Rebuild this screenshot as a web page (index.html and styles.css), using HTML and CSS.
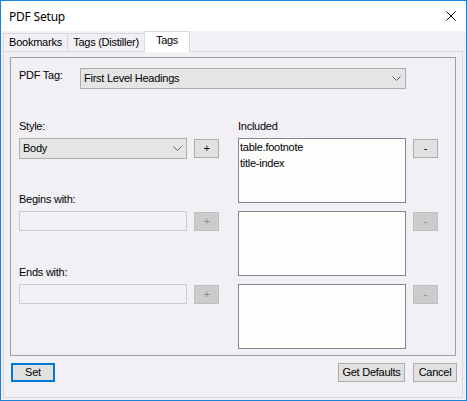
FILE: index.html
```html
<!DOCTYPE html>
<html>
<head>
<meta charset="utf-8">
<title>PDF Setup</title>
<link rel="stylesheet" href="styles.css">
</head>
<body>
<div class="window">
  <div class="titlebar">
    <span class="title">PDF Setup</span>
    <svg class="close" width="10" height="10" viewBox="0 0 10 10"><path d="M0.5 0.5 L9.5 9.5 M9.5 0.5 L0.5 9.5" stroke="#000" stroke-width="1" fill="none"/></svg>
  </div>
  <div class="client">
    <div class="tabstrip">
      <div class="tab tab-bookmarks">Bookmarks</div>
      <div class="tab tab-distiller">Tags (Distiller)</div>
      <div class="tab tab-active">Tags</div>
    </div>
    <div class="tabpage">
      <div class="panel">
        <div class="row-tag">
          <div class="label-tag">PDF Tag:</div>
          <div class="combo combo-tag"><span>First Level Headings</span><svg class="chev" width="9" height="5" viewBox="0 0 9 5"><path d="M0.5 0.5 L4.5 4.5 L8.5 0.5" stroke="#606060" fill="none"/></svg></div>
        </div>
        <div class="columns">
          <div class="col-left">
            <div class="group">
              <div class="label">Style:</div>
              <div class="field-row">
                <div class="combo combo-style"><span>Body</span><svg class="chev" width="9" height="5" viewBox="0 0 9 5"><path d="M0.5 0.5 L4.5 4.5 L8.5 0.5" stroke="#606060" fill="none"/></svg></div>
                <div class="btn-small">+</div>
              </div>
            </div>
            <div class="group">
              <div class="label">Begins with:</div>
              <div class="field-row">
                <div class="textbox"></div>
                <div class="btn-small disabled">+</div>
              </div>
            </div>
            <div class="group">
              <div class="label">Ends with:</div>
              <div class="field-row">
                <div class="textbox"></div>
                <div class="btn-small disabled">+</div>
              </div>
            </div>
          </div>
          <div class="col-right">
            <div class="label">Included</div>
            <div class="listrow">
              <div class="listbox">
                <div class="item">table.footnote</div>
                <div class="item">title-index</div>
              </div>
              <div class="btn-small">-</div>
            </div>
            <div class="listrow">
              <div class="listbox"></div>
              <div class="btn-small disabled">-</div>
            </div>
            <div class="listrow">
              <div class="listbox"></div>
              <div class="btn-small disabled">-</div>
            </div>
          </div>
        </div>
      </div>
      <div class="actions">
        <div class="btn btn-set">Set</div>
        <div class="btn btn-defaults">Get Defaults</div>
        <div class="btn btn-cancel">Cancel</div>
      </div>
    </div>
  </div>
</div>
</body>
</html>
```
FILE: styles.css
```css
* { box-sizing: border-box; }
body {
  margin: 0;
  font-family: "Liberation Sans", Arial, sans-serif;
  font-size: 11px;
  letter-spacing: -0.25px;
  color: #000;
}
.window {
  width: 467px;
  height: 401px;
  border: 1px solid #1883d7;
  background: #f2f0f4;
  display: flex;
  flex-direction: column;
}
.titlebar {
  flex: none;
  height: 30px;
  background: #fff;
  display: flex;
  align-items: center;
  justify-content: space-between;
  padding: 0 10px 0 8px;
}
.title {
  font-family: "Noto Sans", sans-serif;
  font-size: 12px;
  letter-spacing: -0.2px;
}
.close { display: block; }
.client {
  flex: 1;
  padding: 0 3px 0 2px;
}
.tabstrip {
  height: 20px;
  display: flex;
  align-items: flex-end;
}
.tab {
  height: 18px;
  border: 1px solid #d9d9d9;
  border-bottom: none;
  background: #f2f0f4;
  display: flex;
  align-items: center;
  justify-content: center;
  line-height: 13px;
}
.tab + .tab { margin-left: -1px; }
.tab-bookmarks { width: 65px; }
.tab-distiller { width: 78px; }
.tab-active {
  width: 46px;
  height: 21px;
  margin-bottom: -1px;
  background: #fff;
  position: relative;
  z-index: 1;
  align-items: flex-start;
  padding-top: 2px;
}
.tabpage {
  height: 347px;
  border: 1px solid #d9d9d9;
  padding: 5px 6px 0;
}
.panel {
  height: 299px;
  border: 1px solid #a0a0a0;
  padding: 10px 0 0 8px;
}
.row-tag {
  display: flex;
  height: 21px;
}
.label-tag {
  width: 61px;
  padding-top: 1px;
  line-height: 13px;
}
.combo {
  height: 21px;
  border: 1px solid #adadad;
  background: #e5e5e5;
  display: flex;
  align-items: center;
  justify-content: space-between;
  padding: 0 4px 0 3px;
  line-height: 13px;
}
.chev { display: block; }
.combo-tag { width: 326px; }
.combo-style { width: 168px; }
.columns {
  display: flex;
  gap: 19px;
  margin-top: 31px;
}
.col-left { width: 200px; }
.group + .group { margin-top: 34px; }
.label {
  height: 13px;
  line-height: 13px;
  margin-bottom: 5px;
}
.field-row {
  display: flex;
  gap: 7px;
  align-items: flex-start;
  height: 21px;
}
.textbox {
  width: 168px;
  height: 20px;
  border: 1px solid #cccccc;
}
.btn-small {
  width: 25px;
  height: 19px;
  margin-top: 1px;
  border: 1px solid #adadad;
  background: #e1e1e1;
  display: flex;
  align-items: center;
  justify-content: center;
  line-height: 13px;
}
.btn-small.disabled {
  background: #cccccc;
  border-color: #bfbfbf;
  color: #8a8a8a;
}
.listrow {
  display: flex;
  gap: 7px;
  align-items: flex-start;
}
.listrow + .listrow { margin-top: 8px; }
.listbox {
  width: 168px;
  height: 65px;
  border: 1px solid #828790;
  background: #fdfefc;
  padding-left: 1px;
}
.item { line-height: 16px; }
.actions {
  display: flex;
  margin: 7px -1px 0 1px;
}
.btn {
  height: 19px;
  border: 1px solid #adadad;
  background: #e1e1e1;
  display: flex;
  align-items: center;
  justify-content: center;
  line-height: 13px;
}
.btn-set {
  width: 44px;
  border: 2px solid #0078d7;
}
.btn-defaults {
  width: 67px;
  margin-left: auto;
}
.btn-cancel {
  width: 44px;
  margin-left: 8px;
}
```
